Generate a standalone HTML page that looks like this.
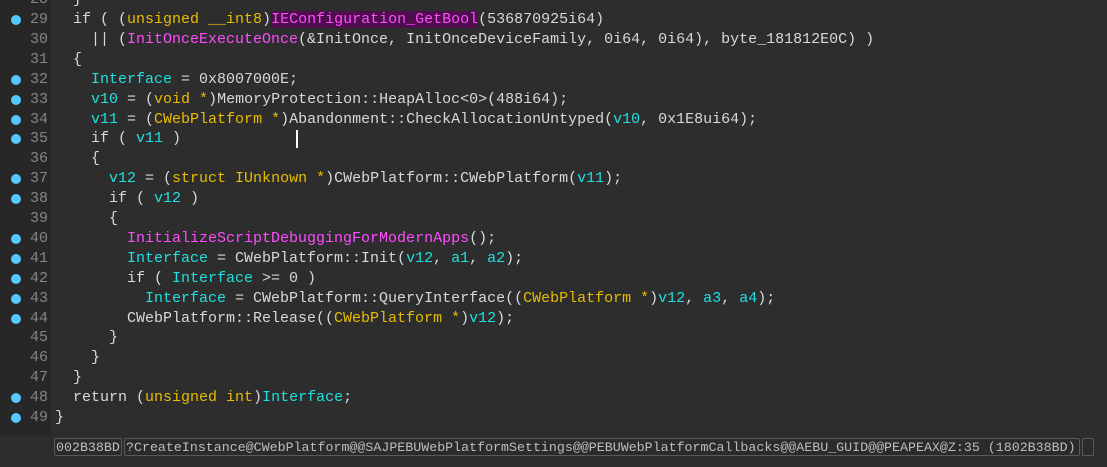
<!DOCTYPE html>
<html><head><meta charset="utf-8"><style>
html,body{margin:0;padding:0;width:1107px;height:467px;overflow:hidden;background:#2d2d2d}
#g{position:absolute;left:0;top:0;width:51px;height:436px;background:#272727}
.l{position:absolute;left:0;height:20px;width:1107px;font:15px/20px "Liberation Mono",monospace;color:#d8d8d8;white-space:pre}
.n{position:absolute;left:0;width:48px;text-align:right;color:#858585}
.d{position:absolute;left:11px;top:5px;width:10px;height:10px;border-radius:50%;background:#55c8ff}
.c{position:absolute;left:55px}
.y{color:#e8bc00}.k{color:#1ee0e0}.m{color:#ff4cff}.p{background:#4e0e4e;color:#ff4cff}
.sb{position:absolute;top:438px;height:18px;border:1px solid #5a5a5a;border-radius:2px;font:13.3px/18px "Liberation Mono",monospace;color:#bdbdbd;white-space:pre;box-sizing:border-box;padding-left:1px;background:#2b2b2b}
#bot{position:absolute;left:0;top:436px;width:1107px;height:31px;background:#2d2d2d}
</style></head><body>
<div id="g"></div>
<div class="l" style="top:-9.9px"><span class="n">28</span><span class="c">  }</span></div>
<div class="l" style="top:10px"><span class="d"></span><span class="n">29</span><span class="c">  if ( (<span class="y">unsigned __int8</span>)<span class="p">IEConfiguration_GetBool</span>(536870925i64)</span></div>
<div class="l" style="top:29.9px"><span class="n">30</span><span class="c">    || (<span class="m">InitOnceExecuteOnce</span>(&amp;InitOnce, InitOnceDeviceFamily, 0i64, 0i64), byte_181812E0C) )</span></div>
<div class="l" style="top:49.8px"><span class="n">31</span><span class="c">  {</span></div>
<div class="l" style="top:69.7px"><span class="d"></span><span class="n">32</span><span class="c">    <span class="k">Interface</span> = 0x8007000E;</span></div>
<div class="l" style="top:89.6px"><span class="d"></span><span class="n">33</span><span class="c">    <span class="k">v10</span> = (<span class="y">void *</span>)MemoryProtection::HeapAlloc&lt;0&gt;(488i64);</span></div>
<div class="l" style="top:109.5px"><span class="d"></span><span class="n">34</span><span class="c">    <span class="k">v11</span> = (<span class="y">CWebPlatform *</span>)Abandonment::CheckAllocationUntyped(<span class="k">v10</span>, 0x1E8ui64);</span></div>
<div class="l" style="top:129.4px"><span class="d"></span><span class="n">35</span><span class="c">    if ( <span class="k">v11</span> )</span><span style="position:absolute;left:296px;top:1px;width:2px;height:18px;background:#fff"></span></div>
<div class="l" style="top:149.3px"><span class="n">36</span><span class="c">    {</span></div>
<div class="l" style="top:169.2px"><span class="d"></span><span class="n">37</span><span class="c">      <span class="k">v12</span> = (<span class="y">struct IUnknown *</span>)CWebPlatform::CWebPlatform(<span class="k">v11</span>);</span></div>
<div class="l" style="top:189.1px"><span class="d"></span><span class="n">38</span><span class="c">      if ( <span class="k">v12</span> )</span></div>
<div class="l" style="top:209px"><span class="n">39</span><span class="c">      {</span></div>
<div class="l" style="top:228.9px"><span class="d"></span><span class="n">40</span><span class="c">        <span class="m">InitializeScriptDebuggingForModernApps</span>();</span></div>
<div class="l" style="top:248.8px"><span class="d"></span><span class="n">41</span><span class="c">        <span class="k">Interface</span> = CWebPlatform::Init(<span class="k">v12</span>, <span class="k">a1</span>, <span class="k">a2</span>);</span></div>
<div class="l" style="top:268.7px"><span class="d"></span><span class="n">42</span><span class="c">        if ( <span class="k">Interface</span> &gt;= 0 )</span></div>
<div class="l" style="top:288.6px"><span class="d"></span><span class="n">43</span><span class="c">          <span class="k">Interface</span> = CWebPlatform::QueryInterface((<span class="y">CWebPlatform *</span>)<span class="k">v12</span>, <span class="k">a3</span>, <span class="k">a4</span>);</span></div>
<div class="l" style="top:308.5px"><span class="d"></span><span class="n">44</span><span class="c">        CWebPlatform::Release((<span class="y">CWebPlatform *</span>)<span class="k">v12</span>);</span></div>
<div class="l" style="top:328.4px"><span class="n">45</span><span class="c">      }</span></div>
<div class="l" style="top:348.3px"><span class="n">46</span><span class="c">    }</span></div>
<div class="l" style="top:368.2px"><span class="n">47</span><span class="c">  }</span></div>
<div class="l" style="top:388.1px"><span class="d"></span><span class="n">48</span><span class="c">  return (<span class="y">unsigned int</span>)<span class="k">Interface</span>;</span></div>
<div class="l" style="top:408px"><span class="d"></span><span class="n">49</span><span class="c">}</span></div>
<div id="bot"></div>
<div class="sb" style="left:54px;width:68px">002B38BD</div>
<div class="sb" style="left:124px;width:956px">?CreateInstance@CWebPlatform@@SAJPEBUWebPlatformSettings@@PEBUWebPlatformCallbacks@@AEBU_GUID@@PEAPEAX@Z:35 (1802B38BD)</div>
<div class="sb" style="left:1082px;width:12px"></div>
</body></html>
